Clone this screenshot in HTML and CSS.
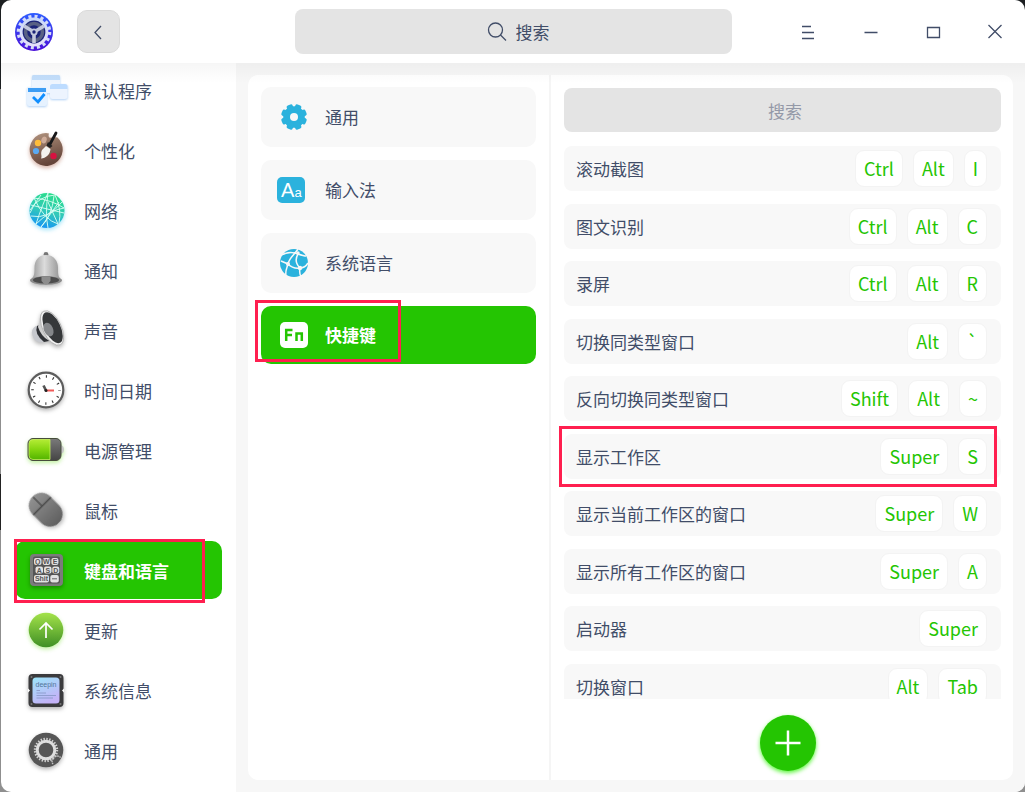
FILE: index.html
```html
<!DOCTYPE html>
<html lang="zh-CN">
  <head>
    <meta charset="UTF-8" />
    <meta name="viewport" content="width=device-width, initial-scale=1.0" />
    <title>控制中心</title>
    <link rel="stylesheet" href="styles.css">
  </head>
  <body>
    <div class="window">
      <!-- 标题栏 -->
      <header class="titlebar">
        <div class="titlebar-left">
          <svg class="logo" viewBox="0 0 40 40" aria-hidden="true">
            <defs>
              <linearGradient id="logoBg" x1="0" y1="0" x2="0" y2="1">
                <stop offset="0" stop-color="#2d5cff" />
                <stop offset="1" stop-color="#4a10d8" />
              </linearGradient>
              <linearGradient id="logoRing" x1="0" y1="0" x2="0" y2="1">
                <stop offset="0" stop-color="#c9d9f8" />
                <stop offset="1" stop-color="#e6e0fa" />
              </linearGradient>
            </defs>
            <circle cx="20" cy="20" r="19" fill="url(#logoBg)" />
            <circle cx="20" cy="20" r="15.6" fill="none" stroke="#d5dcf8" stroke-width="3.4" stroke-dasharray="3 3.13" />
            <circle cx="20" cy="20" r="14.4" fill="url(#logoRing)" />
            <circle cx="20" cy="20" r="11.4" fill="#1c2478" />
            <circle cx="20" cy="20" r="8.5" fill="none" stroke="#596184" stroke-width="3.5" />
            <path d="M20 20V31M20 20L10 14M20 20L30 14" stroke="#c3c8dc" stroke-width="3.6" />
            <circle cx="20" cy="20" r="3.6" fill="#c3c8dc" />
            <circle cx="20" cy="20" r="1.7" fill="#1c2478" />
          </svg>
          <button class="back" type="button" aria-label="返回">
            <svg viewBox="0 0 20 20"><path d="M12 4L6 10.500L12 17" /></svg>
          </button>
        </div>
        <label class="search">
          <svg viewBox="0 0 20 20"><circle cx="8.500" cy="8" r="7" /><path d="M13.500 13L19 18.500" /></svg>
          <input type="text" placeholder="搜索" aria-label="搜索" />
        </label>
        <div class="controls">
          <button type="button" aria-label="菜单"><svg viewBox="0 0 16 16"><path d="M2 2.500H11M2 8.500H14M2 14.500H14" /></svg></button>
          <button type="button" aria-label="最小化"><svg viewBox="0 0 16 16"><path d="M2.500 8.500H15.500" /></svg></button>
          <button type="button" aria-label="最大化"><svg viewBox="0 0 16 16"><path d="M3.500 3.500H15.500V13.500H3.500Z" /></svg></button>
          <button type="button" aria-label="关闭"><svg viewBox="0 0 16 16"><path d="M2.500 1L15.500 14M15.500 1L2.500 14" /></svg></button>
        </div>
      </header>

      <div class="content">
        <!-- 左侧导航 -->
        <nav class="sidebar">
          <a class="nav-item" href="#default">
            <svg viewBox="0 0 44 44">
              <g class="glow-blue">
                <rect x="8" y="7" width="28" height="18" rx="2" fill="#eef5fe" />
                <path d="M8 12V8.500Q8 7 9.500 7H34.500Q36 7 36 8.500V12Z" fill="#c3defb" />
                <rect x="26" y="16" width="17.500" height="15" rx="2.500" fill="#edf4fe" />
                <path d="M26 21V18.500Q26 16 28.500 16H41Q43.500 16 43.500 18.500V21Z" fill="#bddcff" />
                <rect x="3" y="19" width="20" height="19" rx="2" fill="#e6f2ff" />
                <path d="M4 24V20H22V24Z" fill="#3d9df4" />
              </g>
              <path d="M9 29L14 34L20.500 26" fill="none" stroke="#118fff" stroke-width="2.800" />
            </svg>
            <span>默认程序</span>
          </a>
          <a class="nav-item" href="#personal">
            <svg viewBox="0 0 44 44">
              <defs>
                <linearGradient id="wood" x1="0" y1="0" x2="0.300" y2="1">
                  <stop offset="0" stop-color="#b39580" />
                  <stop offset="1" stop-color="#65453a" />
                </linearGradient>
              </defs>
              <path class="glow-brown" d="M25 5.500C23.500 9 26 11 29 9L33.500 9.500A16.500 16.500 0 1 1 22 5Z" fill="url(#wood)" />
              <ellipse cx="20" cy="12" rx="2.600" ry="3.400" fill="#cfac99" transform="rotate(20 20 12)" />
              <circle cx="14" cy="15" r="3.200" fill="#ffbd3a" />
              <circle cx="12" cy="23" r="3.100" fill="#5aa9f2" />
              <circle cx="29.500" cy="28" r="3.200" fill="#d61240" />
              <path d="M32 5L25.500 17" stroke="#171719" stroke-width="2.800" stroke-linecap="round" />
              <path d="M24 14L28.500 18L26 20L22.500 17.500Z" fill="#222" />
              <path d="M22 18L26.500 21C26 27 22 30 17 30.500C18.500 28 16 26 18 22Z" fill="#f4f2ee" />
            </svg>
            <span>个性化</span>
          </a>
          <a class="nav-item" href="#network">
            <svg viewBox="0 0 44 44">
              <defs>
                <linearGradient id="net" x1="0.700" y1="0" x2="0.400" y2="1">
                  <stop offset="0" stop-color="#28df87" />
                  <stop offset="0.550" stop-color="#32c8bb" />
                  <stop offset="1" stop-color="#1595f4" />
                </linearGradient>
              </defs>
              <circle class="glow-cyan" cx="23" cy="22.500" r="17.500" fill="url(#net)" />
              <path d="M10 10Q28 12 40 20M7 17Q23 21 40 25M6 22Q15 8 31 7M12 36Q19 15 24 5M17 39Q28 28 30 8M24 5Q21 25 24 40M10 10Q20 32 34 36M7 28Q24 32 38 14M31 7Q38 22 35 35M6 25Q10 15 17 7M17 39L35 14M12 36Q26 22 40 20M24 14L34 36" fill="none" stroke="#ddfff4" stroke-width="0.900" />
            </svg>
            <span>网络</span>
          </a>
          <a class="nav-item" href="#notice">
            <svg viewBox="0 0 44 44">
              <defs>
                <linearGradient id="bell" x1="0" y1="0" x2="1" y2="0">
                  <stop offset="0" stop-color="#8e8e8e" />
                  <stop offset="0.450" stop-color="#dcdcdc" />
                  <stop offset="1" stop-color="#8c8c8c" />
                </linearGradient>
              </defs>
              <g class="glow-gray">
                <circle cx="22" cy="6.500" r="2.400" fill="#777" />
                <path d="M22 7C30 7 34 13 34 20C34 27 34 29 38 32H6C10 29 10.500 27 10.500 20C10.500 13 14 7 22 7Z" fill="url(#bell)" />
                <ellipse cx="22" cy="32.500" rx="16" ry="4.200" fill="#8b8b8b" />
              </g>
              <ellipse cx="22" cy="32" rx="13" ry="3.600" fill="#4c4c4c" />
              <path d="M17.500 29Q22 27.500 26.500 29V33Q22 40 17.500 33Z" fill="#8d8d8d" />
            </svg>
            <span>通知</span>
          </a>
          <a class="nav-item" href="#sound">
            <svg viewBox="0 0 44 44">
              <g class="glow-gray">
                <path d="M12 18Q5 22 10 31Q16 37 21 33L18 20Z" fill="#c6c8cd" />
                <path d="M13 18Q10 26 20 34L25 33L17 16Z" fill="#303236" />
                <path d="M18 3Q15 13 14 19Q17 28 24 32Q30 36 38 37Z" fill="#cfcfcf" />
                <ellipse cx="28" cy="20" rx="9.200" ry="18.700" transform="rotate(-26 28 20)" fill="#f1f1f1" stroke="#a6a6a6" stroke-width="0.700" />
              </g>
              <ellipse cx="28.600" cy="19.700" rx="7.800" ry="16.800" transform="rotate(-26 28.600 19.700)" fill="#36383a" />
              <ellipse cx="24.500" cy="21.500" rx="4.600" ry="7.200" transform="rotate(-24 24.500 21.500)" fill="#85878a" />
            </svg>
            <span>声音</span>
          </a>
          <a class="nav-item" href="#time">
            <svg viewBox="0 0 44 44">
              <circle class="glow-gray" cx="22" cy="22" r="17.300" fill="#fff" stroke="#5d5d5d" stroke-width="2.200" />
              <circle cx="22" cy="22" r="13.500" fill="none" stroke="#333" stroke-width="2.600" stroke-dasharray="1.100 5.970" stroke-dashoffset="0.550" />
              <path d="M19.500 17.500L22 22.500" stroke="#555" stroke-width="2.600" />
              <path d="M22 22.500H30" stroke="#f05a58" stroke-width="2" />
              <circle cx="22" cy="22.500" r="1.500" fill="#222" />
            </svg>
            <span>时间日期</span>
          </a>
          <a class="nav-item" href="#power">
            <svg viewBox="0 0 44 44">
              <defs>
                <linearGradient id="charge" x1="0" y1="0" x2="0" y2="1">
                  <stop offset="0" stop-color="#b4ec35" />
                  <stop offset="0.500" stop-color="#84d510" />
                  <stop offset="1" stop-color="#53b400" />
                </linearGradient>
                <linearGradient id="cell" x1="0" y1="0" x2="0" y2="1">
                  <stop offset="0" stop-color="#7a7a7a" />
                  <stop offset="1" stop-color="#454545" />
                </linearGradient>
              </defs>
              <g class="glow-green">
                <path d="M37 17Q40 18 40 21.500Q40 25 37 26Z" fill="#c8c8c8" />
                <rect x="4" y="10.500" width="33" height="22" rx="5" fill="url(#cell)" stroke="#474c3c" />
                <path d="M26 11.500H9Q5 11.500 5 15.500V27.500Q5 31.500 9 31.500H26Z" fill="url(#charge)" stroke="#c7f25c" stroke-width="0.800" />
              </g>
            </svg>
            <span>电源管理</span>
          </a>
          <a class="nav-item" href="#mouse">
            <svg viewBox="0 0 44 44">
              <defs>
                <linearGradient id="mouseBody" x1="0" y1="0" x2="0" y2="1">
                  <stop offset="0" stop-color="#919191" />
                  <stop offset="1" stop-color="#606060" />
                </linearGradient>
              </defs>
              <g class="glow-gray" transform="rotate(-45 22 22)">
                <rect x="9.500" y="3" width="25" height="37" rx="12.300" fill="url(#mouseBody)" />
                <path d="M9.500 16.500H34.500M22 4V16.500" fill="none" stroke="#484848" stroke-width="1.300" />
              </g>
            </svg>
            <span>鼠标</span>
          </a>
          <a class="nav-item active" href="#keyboard" aria-current="page">
            <svg viewBox="0 0 44 44">
              <rect class="glow-gray" x="6" y="6" width="33" height="32" rx="4" fill="#7b7b7b" />
              <rect x="9" y="8.500" width="27" height="27" rx="2" fill="#555" />
              <g fill="#e2e2e2">
                <rect x="10" y="10" width="7.500" height="7" rx="2" />
                <rect x="18.700" y="10" width="7.500" height="7" rx="2" />
                <rect x="27.400" y="10" width="7" height="7" rx="2" />
                <rect x="11.500" y="18.500" width="7.500" height="7" rx="2" />
                <rect x="20" y="18.500" width="7.500" height="7" rx="2" />
                <rect x="28.300" y="18.500" width="7" height="7" rx="2" />
                <rect x="10" y="27" width="15" height="7.500" rx="2" />
                <rect x="26.300" y="27" width="8.500" height="7.500" rx="2" />
              </g>
              <g class="keycaps">
                <text x="13.700" y="16">Q</text>
                <text x="22.400" y="16">W</text>
                <text x="31" y="16">E</text>
                <text x="15.200" y="24.600">A</text>
                <text x="23.800" y="24.600">S</text>
                <text x="31.800" y="24.600">D</text>
                <text x="17.500" y="33.200">Shit</text>
              </g>
              <path d="M28 30.800H33" stroke="#666" />
            </svg>
            <span>键盘和语言</span>
            <i class="mark mark-nav"></i>
          </a>
          <a class="nav-item" href="#update">
            <svg viewBox="0 0 44 44">
              <defs>
                <linearGradient id="update" x1="0" y1="0" x2="0" y2="1">
                  <stop offset="0" stop-color="#a4e34a" />
                  <stop offset="1" stop-color="#3f8f25" />
                </linearGradient>
              </defs>
              <circle class="glow-green" cx="22" cy="22" r="17.300" fill="url(#update)" />
              <path d="M22 30V15.500M15.500 21.500L22 15L28.500 21.500" fill="none" stroke="#fff" stroke-width="1.700" />
            </svg>
            <span>更新</span>
          </a>
          <a class="nav-item" href="#info">
            <svg viewBox="0 0 44 44">
              <defs>
                <linearGradient id="chip" x1="0" y1="0" x2="0.500" y2="1">
                  <stop offset="0" stop-color="#9ce6fa" />
                  <stop offset="1" stop-color="#c4b3f8" />
                </linearGradient>
              </defs>
              <rect class="glow-gray" x="4.500" y="6" width="35" height="33" rx="4" fill="#3b3b3d" />
              <path d="M4 20.500L6 22.500L4 24.500ZM40 20.500L38 22.500L40 24.500Z" fill="#fff" />
              <g fill="#777"><circle cx="7.500" cy="9" r="1" /><circle cx="36.500" cy="9" r="1" /><circle cx="7.500" cy="36" r="1" /><circle cx="36.500" cy="36" r="1" /></g>
              <rect x="8.500" y="9.500" width="27" height="26" rx="3.500" fill="url(#chip)" />
              <text class="chip-text" x="22" y="19">deepin</text>
              <path d="M12.500 22.500H16M12.500 25H22M12.500 27.500H32M12.500 30H29" stroke="#8b9ac9" stroke-width="0.900" />
            </svg>
            <span>系统信息</span>
          </a>
          <a class="nav-item" href="#general">
            <svg viewBox="0 0 44 44">
              <circle class="glow-gray" cx="22" cy="22" r="17.300" fill="#565656" />
              <circle cx="22" cy="22" r="11" fill="none" stroke="#d2d2d2" stroke-width="2.400" stroke-dasharray="1.400 1.480" />
              <circle cx="22" cy="22" r="8.800" fill="none" stroke="#dedede" stroke-width="3" />
              <path d="M29 36A4.500 4.500 0 0 1 37 30" fill="none" stroke="#c4c4c4" stroke-width="1.400" stroke-dasharray="1.500 0.700" />
            </svg>
            <span>通用</span>
          </a>
        </nav>

        <main class="main">
          <div class="panel">
            <!-- 二级菜单 -->
            <nav class="submenu">
              <a class="sub-item" href="#sub-general">
                <svg viewBox="0 0 28 28">
                  <g fill="#2bb2dd">
                    <circle cx="14" cy="14" r="10.800" />
                    <rect x="10.800" y="1" width="6.400" height="26" rx="1.800" transform="rotate(22.500 14 14)" />
                    <rect x="10.800" y="1" width="6.400" height="26" rx="1.800" transform="rotate(67.500 14 14)" />
                    <rect x="10.800" y="1" width="6.400" height="26" rx="1.800" transform="rotate(112.500 14 14)" />
                    <rect x="10.800" y="1" width="6.400" height="26" rx="1.800" transform="rotate(157.500 14 14)" />
                  </g>
                  <circle cx="14" cy="14" r="4" fill="#f8f8f8" />
                </svg>
                <span>通用</span>
              </a>
              <a class="sub-item" href="#sub-input">
                <svg viewBox="0 0 28 28">
                  <rect x="-3" y="1" width="28" height="26" rx="5" fill="#2bb2dd" />
                  <text class="aa-big" x="1" y="21">A</text>
                  <text class="aa-small" x="14.500" y="21">a</text>
                </svg>
                <span>输入法</span>
              </a>
              <a class="sub-item" href="#sub-lang">
                <svg viewBox="0 0 28 28">
                  <circle cx="14" cy="14" r="14" fill="#2bb2dd" />
                  <path d="M18 0C15 5 9 9 8 15C7 19 5 22 6 26M0 7C6 3 13 3 18 5M18 5Q24 7 26 7M1 12L8 15C11 18 14 20 20 19M20 19Q25 19 28 14M20 19Q19 24 21 28M18 5C15 10 16 15 20 19" fill="none" stroke="#f8f8f8" stroke-width="1.500" />
                  <circle cx="8" cy="15" r="2" fill="#f8f8f8" />
                  <circle cx="20" cy="19" r="2.200" fill="#f8f8f8" />
                  <circle cx="18" cy="4" r="1.700" fill="#f8f8f8" />
                </svg>
                <span>系统语言</span>
              </a>
              <a class="sub-item active" href="#sub-keys" aria-current="page">
                <svg viewBox="0 0 28 28">
                  <rect x="0" y="1" width="28" height="26" rx="5" fill="#fff" />
                  <path d="M6.200 20V9H12.500M6.200 14H12M16.500 20V12.500H21.800V20" fill="none" stroke="#24c502" stroke-width="2.500" />
                </svg>
                <span>快捷键</span>
                <i class="mark mark-sub"></i>
              </a>
            </nav>

            <!-- 快捷键列表 -->
            <section class="shortcuts">
              <input class="filter" type="text" placeholder="搜索" aria-label="搜索快捷键" />
              <ul class="list">
                <li><span>滚动截图</span><span class="keys"><kbd>Ctrl</kbd><kbd>Alt</kbd><kbd>I</kbd></span></li>
                <li><span>图文识别</span><span class="keys"><kbd>Ctrl</kbd><kbd>Alt</kbd><kbd>C</kbd></span></li>
                <li><span>录屏</span><span class="keys"><kbd>Ctrl</kbd><kbd>Alt</kbd><kbd>R</kbd></span></li>
                <li><span>切换同类型窗口</span><span class="keys"><kbd>Alt</kbd><kbd>`</kbd></span></li>
                <li><span>反向切换同类型窗口</span><span class="keys"><kbd>Shift</kbd><kbd>Alt</kbd><kbd>~</kbd></span></li>
                <li><span>显示工作区</span><span class="keys"><kbd>Super</kbd><kbd>S</kbd></span><i class="mark mark-row"></i></li>
                <li><span>显示当前工作区的窗口</span><span class="keys"><kbd>Super</kbd><kbd>W</kbd></span></li>
                <li><span>显示所有工作区的窗口</span><span class="keys"><kbd>Super</kbd><kbd>A</kbd></span></li>
                <li><span>启动器</span><span class="keys"><kbd>Super</kbd></span></li>
                <li><span>切换窗口</span><span class="keys"><kbd>Alt</kbd><kbd>Tab</kbd></span></li>
              </ul>
              <div class="footer">
                <button class="add" type="button" aria-label="添加快捷键">
                  <svg viewBox="0 0 56 56"><path d="M28 15.500V40.500M15.500 28H40.500" /></svg>
                </button>
              </div>
            </section>
          </div>
        </main>
      </div>
    </div>
  </body>
</html>
```

FILE: styles.css
```css
* {
  margin: 0;
  padding: 0;
  box-sizing: border-box;
}

/* 窗口后面的桌面 */
body {
  height: 100vh;
  padding-left: 1px;
  overflow: hidden;
  background: linear-gradient(#1c1f21 0 89px, #8f8f8f 89px 474px, #222 474px 530px, #8f8f8f 530px);
  font-family: "Noto Sans CJK SC", sans-serif;
  font-size: 17px;
  line-height: 24px;
  color: #414d68;
}

a {
  color: inherit;
  text-decoration: none;
}

button,
input {
  border: none;
  font: inherit;
  color: inherit;
}

svg {
  display: block;
  flex: none;
  overflow: visible;
}

.window {
  display: flex;
  flex-direction: column;
  height: 100%;
  border-radius: 10px;
  overflow: hidden;
  background: #fff;
}

/* 标题栏 */
.titlebar {
  display: grid;
  grid-template-columns: 1fr minmax(0, 437px) 1fr;
  align-items: center;
  height: 63px;
  flex: none;
}

.titlebar-left {
  display: flex;
  align-items: center;
  gap: 23px;
  padding-left: 13px;
}

.logo {
  width: 40px;
  height: 40px;
}

.back {
  display: flex;
  align-items: center;
  justify-content: center;
  width: 43px;
  height: 43px;
  border: 1px solid #dadada;
  border-radius: 10px;
  background: #e4e4e4;
}

.back svg {
  width: 20px;
  height: 20px;
}

.back path,
.search svg,
.controls svg {
  fill: none;
  stroke: #414d68;
  stroke-width: 1.3;
}

.search {
  display: flex;
  align-items: center;
  justify-content: center;
  gap: 9px;
  height: 45px;
  padding-left: 12px;
  border-radius: 8px;
  background: #e4e4e4;
}

.search svg {
  width: 20px;
  height: 20px;
}

.search input {
  width: 36px;
  background: none;
}

.search input::placeholder {
  color: #414d68;
}

.controls {
  display: flex;
  justify-content: flex-end;
}

.controls button {
  display: flex;
  align-items: center;
  justify-content: center;
  width: 62px;
  height: 44px;
  background: none;
}

.controls svg {
  width: 16px;
  height: 16px;
}

/* 主体 */
.content {
  display: flex;
  flex: 1;
  min-height: 0;
  position: relative;
}

/* 标题栏投影 */
.content::before {
  content: "";
  position: absolute;
  z-index: 1;
  top: 0;
  left: 0;
  right: 0;
  height: 20px;
  background: linear-gradient(rgba(0, 0, 0, 0.035), rgba(0, 0, 0, 0));
}

/* 左侧导航 */
.sidebar {
  display: flex;
  flex-direction: column;
  gap: 2px;
  width: 235px;
  flex: none;
  margin-top: -2px;
  padding: 0 14px;
}

.nav-item {
  display: flex;
  align-items: center;
  gap: 16px;
  height: 58px;
  flex: none;
  padding-left: 9px;
  border-radius: 10px;
  position: relative;
}

.nav-item svg {
  width: 44px;
  height: 44px;
}

.nav-item span {
  padding-top: 2px;
}

.active {
  background: #24c502;
  color: #fff;
  font-weight: bold;
}

.glow-blue { filter: drop-shadow(0 1px 1px rgba(60, 140, 230, 0.4)); }
.glow-brown { filter: drop-shadow(0 2px 2px rgba(150, 60, 30, 0.4)); }
.glow-cyan { filter: drop-shadow(0 2px 2px rgba(30, 190, 240, 0.4)); }
.glow-gray { filter: drop-shadow(0 2px 2px rgba(0, 0, 0, 0.3)); }
.glow-green { filter: drop-shadow(0 2px 2px rgba(100, 220, 20, 0.4)); }

.keycaps {
  font: bold 7px "Liberation Sans", sans-serif;
  text-anchor: middle;
  fill: #555;
}

.chip-text {
  font: 7px "Liberation Sans", sans-serif;
  text-anchor: middle;
  fill: #51769a;
}

/* 红色标注框 */
.mark {
  position: absolute;
  z-index: 2;
  border: 3px solid #ff1f4f;
  pointer-events: none;
}

.mark-nav {
  top: -2px;
  left: -1px;
  width: 191px;
  height: 64px;
}

.mark-sub {
  top: -6px;
  left: -6px;
  width: 146px;
  height: 62px;
}

.mark-row {
  top: -8px;
  left: -5px;
  right: 4px;
  bottom: -8px;
}

/* 右侧内容 */
.main {
  flex: 1;
  min-width: 0;
  padding: 12px;
  background: #f7f7f7;
}

.panel {
  display: flex;
  height: 100%;
  border-radius: 10px;
  background: #fff;
}

.submenu {
  display: flex;
  flex-direction: column;
  gap: 13px;
  width: 303px;
  flex: none;
  padding: 12px 13px;
  border-right: 2px solid #f5f5f5;
}

.sub-item {
  display: flex;
  align-items: center;
  gap: 17px;
  height: 60px;
  padding-left: 19px;
  border-radius: 10px;
  background: #f8f8f8;
  position: relative;
}

.sub-item.active {
  height: 58px;
  background: #24c502;
}

.sub-item svg {
  width: 28px;
  height: 28px;
}

.aa-big {
  font: 20px "Liberation Sans", sans-serif;
  fill: #fff;
}

.aa-small {
  font: 13px "Liberation Sans", sans-serif;
  fill: #fff;
}

.shortcuts {
  display: flex;
  flex-direction: column;
  flex: 1;
  min-width: 0;
  padding-top: 13px;
}

.filter {
  height: 44px;
  flex: none;
  margin: 0 12px 14px 13px;
  padding-left: 5px;
  border-radius: 8px;
  background: #e4e4e4;
  text-align: center;
}

.filter::placeholder {
  color: #9499a8;
}

.list {
  display: flex;
  flex-direction: column;
  gap: 12px;
  flex: 1;
  min-height: 0;
  padding: 0 12px 0 13px;
  overflow-y: auto;
  scrollbar-width: none;
  list-style: none;
}

.list li {
  display: flex;
  align-items: center;
  justify-content: space-between;
  height: 45px;
  flex: none;
  padding: 0 14px 0 12px;
  border-radius: 8px;
  background: #f8f8f8;
  position: relative;
}

.list li:nth-child(odd) {
  margin-bottom: 1px;
}

.keys {
  display: flex;
  gap: 10px;
}

kbd {
  height: 37px;
  padding: 0 8px;
  border: 1px solid #f3f3f3;
  border-radius: 9px;
  background: #fff;
  font: inherit;
  font-size: 18px;
  line-height: 35px;
  color: #24c502;
}

.footer {
  display: flex;
  justify-content: center;
  height: 81px;
  flex: none;
  padding: 16px 0 9px 12px;
}

.add {
  width: 56px;
  height: 56px;
  border-radius: 50%;
  background: #24c502;
  box-shadow: 0 2px 4px #5cf53c;
}

.add path {
  stroke: #fff;
  stroke-width: 2.5;
}
```
